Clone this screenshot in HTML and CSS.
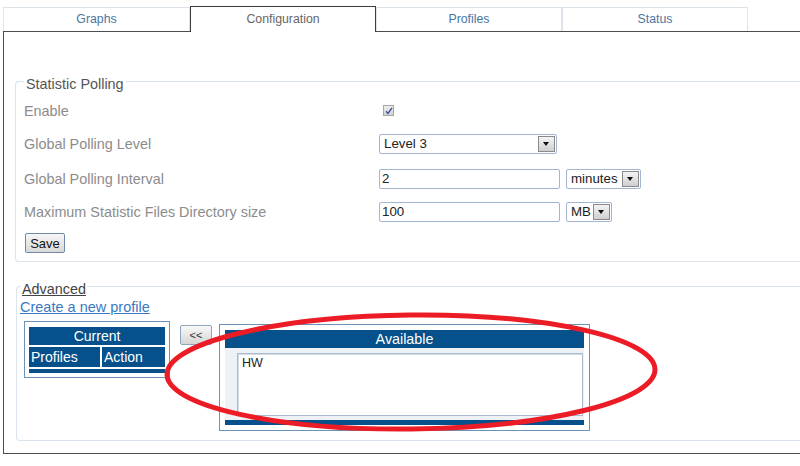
FILE: index.html
```html
<!DOCTYPE html>
<html>
<head>
<link rel="stylesheet" href="styles.css">
</head>
<body>
    <div class="tabs">
        <div class="tab tab-graphs">Graphs</div>
        <div class="tab active">Configuration</div>
        <div class="tab">Profiles</div>
        <div class="tab">Status</div>
    </div>

    <div class="panel">
        <fieldset class="group polling">
            <legend>Statistic Polling</legend>
            <div class="form-row row-enable">
                <span class="label">Enable</span>
                <span class="checkbox">
                    <svg width="8" height="8" viewBox="0 0 8 8"><path d="M1 4.2 L3 6.4 L7 0.8" fill="none" stroke="#3a4fa6" stroke-width="1.4"/></svg>
                </span>
            </div>
            <div class="form-row row-level">
                <span class="label">Global Polling Level</span>
                <span class="select select-level">Level 3<span class="arrow"></span></span>
            </div>
            <div class="form-row row-interval">
                <span class="label">Global Polling Interval</span>
                <span class="text-input">2</span>
                <span class="select select-minutes">minutes<span class="arrow"></span></span>
            </div>
            <div class="form-row row-size">
                <span class="label">Maximum Statistic Files Directory size</span>
                <span class="text-input">100</span>
                <span class="select select-mb">MB<span class="arrow"></span></span>
            </div>
            <button class="save-btn">Save</button>
        </fieldset>

        <fieldset class="group advanced">
            <legend>Advanced</legend>
            <a class="create-link" href="#">Create a new profile</a>
            <div class="profiles">
                <div class="current">
                    <div class="cell head">Current</div>
                    <div class="cell">Profiles</div>
                    <div class="cell">Action</div>
                    <div class="bar"></div>
                </div>
                <button class="move-btn">&lt;&lt;</button>
                <div class="available">
                    <div class="head">Available</div>
                    <div class="list-area">
                        <div class="listbox">HW</div>
                    </div>
                    <div class="bar"></div>
                </div>
            </div>
        </fieldset>
    </div>

    <svg class="highlight" width="800" height="466" viewBox="0 0 800 466">
        <ellipse cx="411" cy="372" rx="244" ry="57" fill="none" stroke="#ec1c26" stroke-width="5" transform="rotate(-0.6 411 372)"/>
    </svg>
</body>
</html>
```

FILE: styles.css
```css
body {
    margin: 0;
    font-family: "Liberation Sans", Arial, sans-serif;
    background-color: #fff;
    color: #222;
    overflow: hidden;
    position: relative;
    height: 466px;
}

.tabs {
    display: flex;
    align-items: flex-end;
    height: 25px;
    padding-top: 6px;
    padding-left: 3px;
}

.tab {
    box-sizing: border-box;
    width: 186px;
    height: 24px;
    border: 1px solid #dde3ea;
    border-bottom: none;
    text-align: center;
    line-height: 23px;
    font-size: 12.3px;
    color: #4b76a2;
}

.tab-graphs {
    width: 187px;
}

.tab.active {
    position: relative;
    z-index: 1;
    height: 26px;
    margin-bottom: -1px;
    border-color: #3d3d3d;
    background-color: #fff;
    color: #666;
    line-height: 24px;
}

.panel {
    margin-left: 3px;
    height: 421px;
    border-top: 1px solid #4d4d4d;
    border-left: 1px solid #4d4d4d;
    border-bottom: 1px solid #4d4d4d;
}

.group {
    margin: 0;
    border: 1px solid #dbe3ec;
    border-right: none;
    border-radius: 4px 0 0 4px;
    min-width: 0;
}

.group legend {
    font-size: 14.4px;
    line-height: 16px;
    padding: 6px 2px 0;
    color: #555;
}

.polling {
    margin: 38px 0 0 11px;
    padding: 0 0 8px 8px;
}

.form-row {
    display: flex;
    align-items: center;
}

.row-enable {
    height: 32px;
    margin-top: 3px;
}

.row-level {
    height: 34px;
}

.row-interval {
    height: 35px;
}

.row-size {
    height: 32px;
}

.label {
    width: 355px;
    font-size: 14.4px;
    color: #8c8c8c;
}

.checkbox {
    box-sizing: border-box;
    width: 11px;
    height: 11px;
    margin-left: 4px;
    margin-top: -1px;
    border: 1px solid #a6a6a6;
    background: linear-gradient(#ececec, #d4d4d4);
    display: flex;
    align-items: center;
    justify-content: center;
}

.select,
.text-input {
    box-sizing: border-box;
    height: 20px;
    border: 1px solid #a3b6d1;
    border-radius: 2px;
    font-size: 13.3px;
    line-height: 18px;
    color: #222;
    background-color: #fff;
    position: relative;
}

.select {
    padding-left: 4px;
}

.text-input {
    width: 181px;
    padding-left: 2px;
}

.select-level {
    width: 178px;
}

.select-minutes {
    width: 75px;
    margin-left: 6px;
}

.select-mb {
    width: 46px;
    margin-left: 6px;
}

.arrow {
    position: absolute;
    right: 1px;
    top: 1px;
    box-sizing: border-box;
    width: 17px;
    height: 16px;
    border: 1px solid #8a8a8a;
    background: linear-gradient(#f4f4f4, #cfcfcf);
}

.arrow::after {
    content: "";
    position: absolute;
    left: 4px;
    top: 5px;
    border-left: 3.5px solid transparent;
    border-right: 3.5px solid transparent;
    border-top: 4px solid #111;
}

.save-btn {
    box-sizing: border-box;
    display: block;
    width: 40px;
    height: 20px;
    margin: 5px 0 0 1px;
    padding: 0;
    border: 1px solid #6f8aa9;
    border-radius: 2px;
    background: linear-gradient(#f6f6f6, #d9d9d9);
    font-family: "Liberation Sans", Arial, sans-serif;
    font-size: 13px;
    color: #111;
}

.advanced {
    margin: 13px 0 0 12px;
    padding: 0 0 9px 3px;
}

.advanced legend {
    margin-left: 1px;
    padding: 6px 1px 0;
    color: #444;
    text-decoration: underline;
}

.create-link {
    display: block;
    margin-top: 2px;
    font-size: 14.5px;
    line-height: 16px;
    color: #3b78bf;
    text-decoration: underline;
    width: max-content;
}

.profiles {
    display: flex;
    align-items: flex-start;
    margin-top: 6px;
}

.current {
    box-sizing: border-box;
    width: 146px;
    margin-left: 4px;
    padding: 5px 4px 4px;
    border: 1px solid #6d92b8;
    display: grid;
    grid-template-columns: 71px 1fr;
    grid-template-rows: 18px 20px 4px;
    gap: 2px;
}

.current .cell {
    background-color: #06518b;
    color: #fff;
    font-size: 14px;
    line-height: 20px;
    padding-left: 2px;
}

.current .head {
    grid-column: 1 / 3;
    text-align: center;
    line-height: 18px;
    padding-left: 0;
}

.current .bar {
    grid-column: 1 / 3;
    background-color: #06518b;
}

.move-btn {
    box-sizing: border-box;
    width: 32px;
    height: 20px;
    margin: 4px 0 0 10px;
    padding: 0;
    border: 1px solid #8fa5bd;
    border-radius: 2px;
    background: linear-gradient(#f8f8f8, #d6d6d6);
    font-family: "Liberation Sans", Arial, sans-serif;
    font-size: 11px;
    color: #333;
}

.available {
    box-sizing: border-box;
    width: 371px;
    margin: 3px 0 0 7px;
    padding: 5px;
    border: 1px solid #6d92b8;
}

.available .head {
    height: 18px;
    background-color: #06518b;
    color: #fff;
    text-align: center;
    font-size: 14.3px;
    line-height: 18px;
}

.list-area {
    background-color: #eef1f5;
    padding: 5px 1px 4px 12px;
}

.listbox {
    box-sizing: border-box;
    height: 63px;
    border: 1px solid #a9b9cf;
    box-shadow: inset 1px 1px 0 #d5dde8;
    background-color: #fff;
    padding: 2px 4px;
    font-size: 12.5px;
    color: #222;
}

.available .bar {
    height: 5px;
    background-color: #06518b;
}

.highlight {
    position: absolute;
    left: 0;
    top: 0;
    pointer-events: none;
}
```
